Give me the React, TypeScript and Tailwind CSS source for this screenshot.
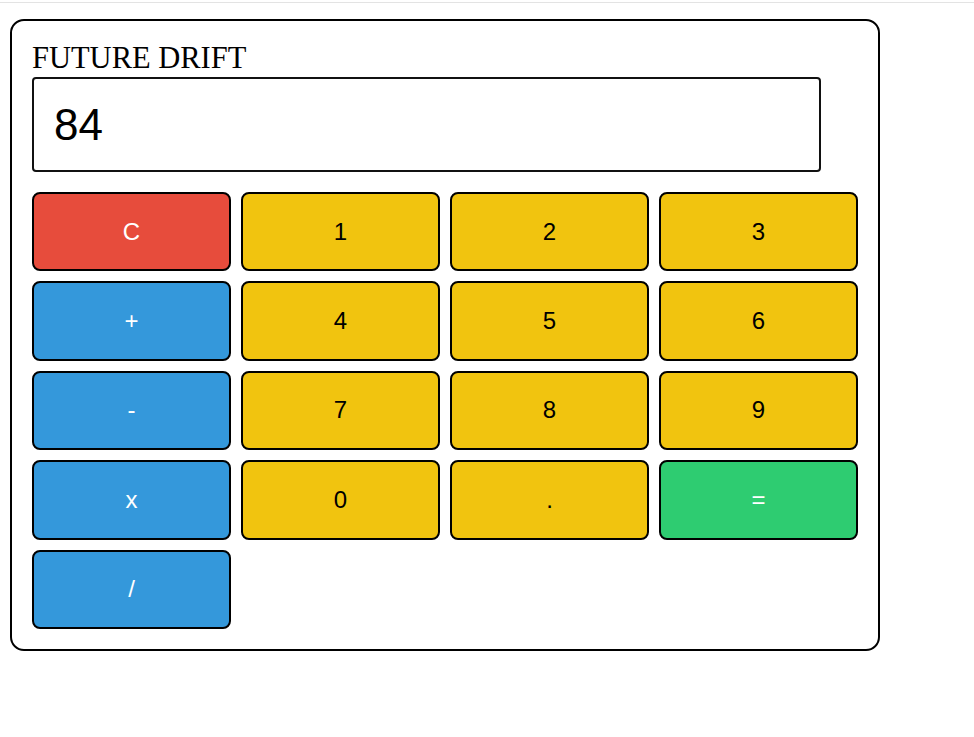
const keys = [
  { label: 'C', color: 'bg-[#e74c3c] text-white' },
  { label: '1', color: 'bg-[#f1c40f] text-black' },
  { label: '2', color: 'bg-[#f1c40f] text-black' },
  { label: '3', color: 'bg-[#f1c40f] text-black' },
  { label: '+', color: 'bg-[#3498db] text-white' },
  { label: '4', color: 'bg-[#f1c40f] text-black' },
  { label: '5', color: 'bg-[#f1c40f] text-black' },
  { label: '6', color: 'bg-[#f1c40f] text-black' },
  { label: '-', color: 'bg-[#3498db] text-white' },
  { label: '7', color: 'bg-[#f1c40f] text-black' },
  { label: '8', color: 'bg-[#f1c40f] text-black' },
  { label: '9', color: 'bg-[#f1c40f] text-black' },
  { label: 'x', color: 'bg-[#3498db] text-white' },
  { label: '0', color: 'bg-[#f1c40f] text-black' },
  { label: '.', color: 'bg-[#f1c40f] text-black' },
  { label: '=', color: 'bg-[#2ecc71] text-white' },
  { label: '/', color: 'bg-[#3498db] text-white' },
]

export default function App() {
  return (
    <div className="min-h-[737px] bg-white">
      <div className="pt-[2px]">
        <div className="h-px bg-[#e3e3e3]" />
      </div>

      <div className="ml-[10px] mt-[16px] w-[870px] rounded-[14px] border-2 border-black p-5">
        <h1 className="text-[30.5px] leading-[35px] text-black [font-family:'Liberation_Serif',serif]">
          FUTURE DRIFT
        </h1>

        <div className="mt-[1px] w-[789px] rounded-[4px] border-2 border-[#111] px-5 py-5 text-[44px] leading-[51px] text-black [font-family:'Liberation_Sans',Arial,sans-serif]">
          84
        </div>

        <div className="mt-5 grid grid-cols-4 gap-[10px] [font-family:'Liberation_Sans',Arial,sans-serif]">
          {keys.map((k) => (
            <button
              key={k.label}
              className={`flex h-[79.4px] items-center justify-center rounded-[8px] border-2 border-black text-[24px] ${k.color}`}
            >
              {k.label}
            </button>
          ))}
        </div>
      </div>
    </div>
  )
}
